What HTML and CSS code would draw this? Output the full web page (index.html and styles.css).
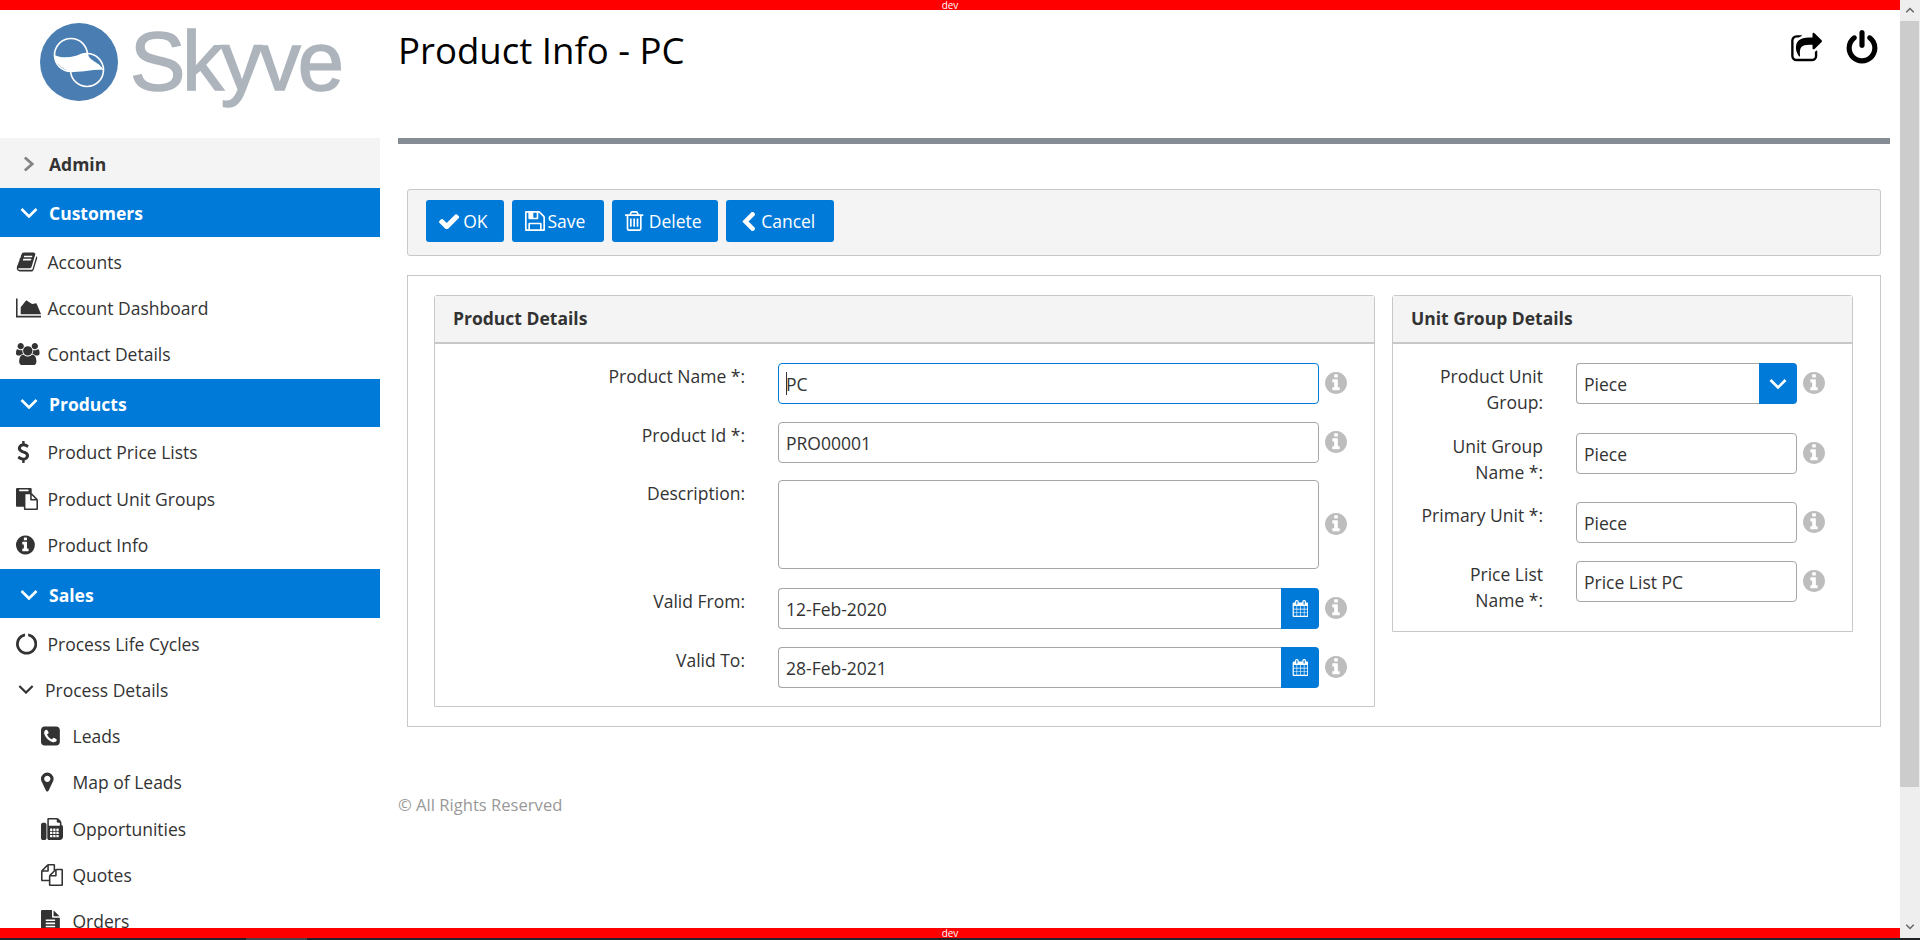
FILE: index.html
```html
<!DOCTYPE html>
<html lang="en">
<head>
  <meta charset="UTF-8">
  <meta name="viewport" content="width=device-width, initial-scale=1.0">
  <title>Product Info - PC</title>
  <link rel="stylesheet" href="styles.css">
</head>
<body>
  <!-- Shared icon paths -->
  <svg class="icon-defs" aria-hidden="true">
    <defs>
      <path id="p-info" d="M1152 1376v-160q0-14-9-23t-23-9h-96v-512q0-14-9-23t-23-9h-320q-14 0-23 9t-9 23v160q0 14 9 23t23 9h96v320h-96q-14 0-23 9t-9 23v160q0 14 9 23t23 9h448q14 0 23-9t9-23zm-128-896v-160q0-14-9-23t-23-9h-192q-14 0-23 9t-9 23v160q0 14 9 23t23 9h192q14 0 23-9t9-23zm640 416q0 209-103 385.5t-279.5 279.5-385.5 103-385.5-103-279.5-279.5-103-385.5 103-385.5 279.5-279.5 385.5-103 385.5 103 279.5 279.5 103 385.5z"/>
      <path id="p-calendar" d="M192 1664h288v-288h-288v288zm352 0h320v-288h-320v288zm-352-352h288v-320h-288v320zm352 0h320v-320h-320v320zm-352-384h288v-288h-288v288zm736 736h320v-288h-320v288zm-384-736h320v-288h-320v288zm768 736h288v-288h-288v288zm-384-352h320v-320h-320v320zm-352-864v-288q0-13-9.5-22.5t-22.5-9.5h-64q-13 0-22.5 9.5t-9.5 22.5v288q0 13 9.5 22.5t22.5 9.5h64q13 0 22.5-9.5t9.5-22.5zm736 864h288v-320h-288v320zm-384-384h320v-288h-320v288zm384 0h288v-288h-288v288zm32-480v-288q0-13-9.5-22.5t-22.5-9.5h-64q-13 0-22.5 9.5t-9.5 22.5v288q0 13 9.5 22.5t22.5 9.5h64q13 0 22.5-9.5t9.5-22.5zm384-64v1280q0 52-38 90t-90 38h-1408q-52 0-90-38t-38-90v-1280q0-52 38-90t90-38h128v-96q0-66 47-113t113-47h64q66 0 113 47t47 113v96h384v-96q0-66 47-113t113-47h64q66 0 113 47t47 113v96h128q52 0 90 38t38 90z"/>
    </defs>
  </svg>

  <div class="window">
    <div class="page">
      <div class="env-bar">dev</div>

      <div class="content">
        <!-- Left side: logo and menu -->
        <aside class="sidebar">
          <div class="logo">
            <svg class="logo-mark" viewBox="0 0 78 78">
              <circle cx="39" cy="39" r="39" fill="#4a7eb2"/>
              <circle cx="31" cy="32" r="16.5" fill="none" stroke="#fff" stroke-width="1.6"/>
              <circle cx="47" cy="47" r="16.5" fill="none" stroke="#fff" stroke-width="1.6"/>
              <path d="M14.500 32C24 37 36 33 47.500 29.500C48 38 60 39 63.500 47C52 46 42 50 31 48.500C23 46 14.500 41 14.500 32Z" fill="#fff"/>
            </svg>
            <span class="logo-text">Skyve</span>
          </div>

          <nav class="menu">
            <div class="menu-head menu-closed">
              <svg class="chev-right" viewBox="0 0 12 16"><path d="M2 1l8 7-8 7"/></svg>
              <span>Admin</span>
            </div>

            <div class="menu-head">
              <svg class="chev-down" viewBox="0 0 18 10"><path d="M1.500 1l7.500 7.500 7.500-7.500"/></svg>
              <span>Customers</span>
            </div>
            <div class="menu-list">
              <a class="menu-item"><span class="menu-icon"><svg class="fa" viewBox="0 0 1792 1792"><path d="M1703 478q40 57 18 129l-275 906q-19 64-76.500 107.500t-122.500 43.500h-923q-77 0-148.500-53.500t-99.500-131.500q-24-67-2-127 0-4 3-27t4-37q1-8-3-21.500t-3-19.500q2-11 8-21t16.500-23.500 16.500-23.500q23-38 45-91.500t30-91.500q3-10 .5-30t-.5-28q3-11 17-28t17-23q21-36 42-92t25-90q1-9-2.500-32t.5-28q4-13 22-30.500t22-22.500q19-26 42.500-84.500t27.500-96.500q1-8-3-25.500t-2-26.500q2-8 9-18t18-23 17-21q8-12 16.500-30.500t15-35 16-36 19.500-32 26.500-23.500 36-11.500 47.500 5.500l-1 3q38-9 51-9h761q74 0 114 56t18 130l-274 906q-36 119-71.500 153.500t-128.500 34.500h-869q-27 0-38 15-11 16-1 43 24 70 144 70h923q29 0 56-15.500t35-41.500l300-987q7-22 5-57 38 15 59 43zm-1064 2q-4 13 2 22.500t20 9.500h608q13 0 25.500-9.500t16.500-22.500l21-64q4-13-2-22.500t-20-9.500h-608q-13 0-25.500 9.500t-16.500 22.500zm-83 256q-4 13 2 22.500t20 9.500h608q13 0 25.500-9.500t16.500-22.500l21-64q4-13-2-22.500t-20-9.500h-608q-13 0-25.500 9.500t-16.500 22.500z"/></svg></span>Accounts</a>
              <a class="menu-item"><span class="menu-icon"><svg class="fa" viewBox="0 0 2048 1792"><path d="M2048 1536v128h-2048v-1536h128v1408h1920zm-384-1024l384 896h-1664v-576l448-576 480 320 352-64z"/></svg></span>Account Dashboard</a>
              <a class="menu-item"><span class="menu-icon"><svg class="fa" viewBox="0 0 1920 1792"><path d="M593 896q-162 5-265 128h-134q-82 0-138-40.500t-56-118.500q0-353 124-353 6 0 43.500 21t97.500 42.500 119 21.500q67 0 133-23-5 37-5 66 0 139 81 256zm1071 637q0 120-73 189.500t-194 69.500h-874q-121 0-194-69.500t-73-189.500q0-53 3.500-103.500t14-109 26.500-108.500 43-97.500 62-81 85.500-53.500 111.500-20q10 0 43 21.500t73 48 107 48 135 21.500 135-21.500 107-48 73-48 43-21.500q61 0 111.500 20t85.500 53.500 62 81 43 97.500 26.500 108.500 14 109 3.500 103.500zm-1024-1277q0 106-75 181t-181 75-181-75-75-181 75-181 181-75 181 75 75 181zm704 384q0 159-112.500 271.500t-271.500 112.500-271.500-112.500-112.500-271.500 112.500-271.500 271.500-112.500 271.500 112.500 112.500 271.500zm576 225q0 78-56 118.500t-138 40.500h-134q-103-123-265-128 81-117 81-256 0-29-5-66 66 23 133 23 59 0 119-21.500t97.500-42.500 43.500-21q124 0 124 353zm-128-609q0 106-75 181t-181 75-181-75-75-181 75-181 181-75 181 75 75 181z"/></svg></span>Contact Details</a>
            </div>

            <div class="menu-head">
              <svg class="chev-down" viewBox="0 0 18 10"><path d="M1.500 1l7.500 7.500 7.500-7.500"/></svg>
              <span>Products</span>
            </div>
            <div class="menu-list">
              <a class="menu-item"><span class="menu-icon"><svg class="fa" viewBox="300 0 1100 1792"><path d="M1362 1185q0 153-99.500 263.500t-258.500 136.500v175q0 14-9 23t-23 9h-135q-13 0-22.500-9.500t-9.500-22.500v-175q-66-9-127.500-31t-101.500-44.500-74-48-46.500-37.500-17.500-18q-17-21-2-41l103-135q7-10 23-12 15-2 24 9l2 2q113 99 243 125 37 8 74 8 81 0 142.500-43t61.500-122q0-28-15-53t-33.500-42-58.500-37.500-66-32-80-32.500q-39-16-61.500-25t-61.500-26.500-62.500-31-56.500-35.500-53.500-42.500-43.500-49-35.500-58-21-66.500-8.500-78q0-138 98-242t255-134v-180q0-13 9.500-22.500t22.500-9.500h135q14 0 23 9t9 23v176q57 6 110.500 23t87 33.500 63.500 37.500 39 29 15 14q17 18 5 38l-81 146q-8 15-23 16-14 3-27-7-3-3-14.500-12t-39-26.500-58.500-32-74.500-26-85.500-11.500q-95 0-155 43t-60 111q0 26 8.500 48t29.500 41.500 39.500 33 56 31 60.500 27 70 27.500q53 20 81 31.500t76 35 75.500 42.500 62 50 53 63.500 31.500 76.500 13 94z"/></svg></span>Product Price Lists</a>
              <a class="menu-item"><span class="menu-icon"><svg class="fa" viewBox="0 0 1792 1792"><path d="M768 1664h896v-640h-416q-40 0-68-28t-28-68v-416h-384v1152zm256-1440v-64q0-13-9.500-22.500t-22.500-9.500h-704q-13 0-22.500 9.500t-9.500 22.500v64q0 13 9.500 22.500t22.500 9.500h704q13 0 22.500-9.500t9.500-22.500zm256 672h299l-299-299v299zm512 128v672q0 40-28 68t-68 28h-960q-40 0-68-28t-28-68v-160h-544q-40 0-68-28t-28-68v-1344q0-40 28-68t68-28h1088q40 0 68 28t28 68v328q21 13 36 28l408 408q28 28 48 76t20 88z"/></svg></span>Product Unit Groups</a>
              <a class="menu-item"><span class="menu-icon"><svg class="fa" viewBox="128 0 1536 1792"><use href="#p-info"/></svg></span>Product Info</a>
            </div>

            <div class="menu-head menu-head-sales">
              <svg class="chev-down" viewBox="0 0 18 10"><path d="M1.500 1l7.500 7.500 7.500-7.500"/></svg>
              <span>Sales</span>
            </div>
            <div class="menu-list">
              <a class="menu-item"><span class="menu-icon"><svg class="fa" viewBox="32 0 1728 1792"><path d="M1760 896q0 176-68.500 336t-184 275.500-275.500 184-336 68.500-336-68.500-275.500-184-184-275.500-68.500-336q0-213 97-398.500t265-305.500 374-151v228q-221 45-366.500 221t-145.500 406q0 130 51 248.500t136.500 204 204 136.500 248.500 51 248.500-51 204-136.500 136.500-204 51-248.500q0-230-145.500-406t-366.500-221v-228q206 31 374 151t265 305.500 97 398.500z"/></svg></span>Process Life Cycles</a>
              <a class="menu-item menu-group"><svg class="chev-group" viewBox="0 0 18 10"><path d="M1.500 1l7.500 7.500 7.500-7.500"/></svg>Process Details</a>
              <a class="menu-item menu-sub"><span class="menu-icon"><svg class="fa" viewBox="128 0 1536 1792"><path d="M1408 1193q0-11-2-16t-18-16.500-40.500-25-47.500-26.500-45.500-25-28.500-15q-5-3-19-13t-25-15-21-5q-15 0-36.500 20.500t-39.500 45-38.500 45-33.500 20.500q-7 0-16.500-3.500t-15.500-6.500-17-9.500-14-8.500q-99-55-170-126.500t-127-170.500q-2-3-8.500-14t-9.500-17-6.500-15.500-3.500-16.500q0-13 20.500-33.500t45-38.500 45-39.500 20.500-36.500q0-10-5-21t-15-25-13-19q-3-6-15-28.500t-25-45.500-26.500-47.500-25-40.500-16.500-18-16-2q-48 0-101 22-46 21-80 94.500t-34 130.500q0 16 2.500 34t5 30.500 9 33 10 29.500 12.500 33 11 30q60 164 216.500 320.500t320.500 216.500q6 2 30 11t33 12.500 29.500 10 33 9 30.500 5 34 2.500q57 0 130.500-34t94.500-80q22-53 22-101zm256-777v960q0 119-84.500 203.500t-203.500 84.500h-960q-119 0-203.500-84.500t-84.500-203.500v-960q0-119 84.500-203.500t203.500-84.500h960q119 0 203.500 84.500t84.500 203.500z"/></svg></span>Leads</a>
              <a class="menu-item menu-sub"><span class="menu-icon"><svg class="fa" viewBox="384 0 1024 1792"><path d="M1152 640q0-106-75-181t-181-75-181 75-75 181 75 181 181 75 181-75 75-181zm256 0q0 109-33 179l-364 774q-16 33-47.500 52t-67.500 19-67.500-19-46.500-52l-365-774q-33-70-33-179 0-212 150-362t362-150 362 150 150 362z"/></svg></span>Map of Leads</a>
              <a class="menu-item menu-sub"><span class="menu-icon"><svg class="fa" viewBox="0 0 1792 1792"><path d="M288 384q66 0 113 47t47 113v1088q0 66-47 113t-113 47h-128q-66 0-113-47t-47-113v-1088q0-66 47-113t113-47h128zm1376 163q58 34 93 93t35 128v768q0 106-75 181t-181 75h-864q-66 0-113-47t-47-113v-1536q0-40 28-68t68-28h672q40 0 88 20t76 48l152 152q28 28 48 76t20 88v163zm-736 989v-128q0-14-9-23t-23-9h-128q-14 0-23 9t-9 23v128q0 14 9 23t23 9h128q14 0 23-9t9-23zm0-256v-128q0-14-9-23t-23-9h-128q-14 0-23 9t-9 23v128q0 14 9 23t23 9h128q14 0 23-9t9-23zm0-256v-128q0-14-9-23t-23-9h-128q-14 0-23 9t-9 23v128q0 14 9 23t23 9h128q14 0 23-9t9-23zm256 512v-128q0-14-9-23t-23-9h-128q-14 0-23 9t-9 23v128q0 14 9 23t23 9h128q14 0 23-9t9-23zm0-256v-128q0-14-9-23t-23-9h-128q-14 0-23 9t-9 23v128q0 14 9 23t23 9h128q14 0 23-9t9-23zm0-256v-128q0-14-9-23t-23-9h-128q-14 0-23 9t-9 23v128q0 14 9 23t23 9h128q14 0 23-9t9-23zm256 512v-128q0-14-9-23t-23-9h-128q-14 0-23 9t-9 23v128q0 14 9 23t23 9h128q14 0 23-9t9-23zm0-256v-128q0-14-9-23t-23-9h-128q-14 0-23 9t-9 23v128q0 14 9 23t23 9h128q14 0 23-9t9-23zm0-256v-128q0-14-9-23t-23-9h-128q-14 0-23 9t-9 23v128q0 14 9 23t23 9h128q14 0 23-9t9-23zm96-384v-256h-160q-40 0-68-28t-28-68v-160h-640v512h896z"/></svg></span>Opportunities</a>
              <a class="menu-item menu-sub"><span class="menu-icon"><svg class="fa" viewBox="0 0 1792 1792"><path d="M1696 384q40 0 68 28t28 68v1216q0 40-28 68t-68 28h-960q-40 0-68-28t-28-68v-288h-544q-40 0-68-28t-28-68v-672q0-40 20-88t48-76l408-408q28-28 76-48t88-20h416q40 0 68 28t28 68v328q68-40 128-40h416zm-544 213l-299 299h299v-299zm-640-384l-299 299h299v-299zm196 647l316-316v-416h-384v416q0 40-28 68t-68 28h-416v640h512v-256q0-40 20-88t48-76zm956 804v-1152h-384v416q0 40-28 68t-68 28h-416v640h896z"/></svg></span>Quotes</a>
              <a class="menu-item menu-sub"><span class="menu-icon"><svg class="fa" viewBox="128 0 1536 1792"><path d="M1596 476q14 14 28 36h-472v-472q22 14 36 28zm-476 164h544v1056q0 40-28 68t-68 28h-1344q-40 0-68-28t-28-68v-1600q0-40 28-68t68-28h800v544q0 40 28 68t68 28zm160 736v-64q0-14-9-23t-23-9h-704q-14 0-23 9t-9 23v64q0 14 9 23t23 9h704q14 0 23-9t9-23zm0-256v-64q0-14-9-23t-23-9h-704q-14 0-23 9t-9 23v64q0 14 9 23t23 9h704q14 0 23-9t9-23zm0-256v-64q0-14-9-23t-23-9h-704q-14 0-23 9t-9 23v64q0 14 9 23t23 9h704q14 0 23-9t9-23z"/></svg></span>Orders</a>
            </div>
          </nav>
        </aside>

        <!-- Right side: the edit view -->
        <main class="main">
          <header class="page-head">
            <h1>Product Info - PC</h1>
            <div class="head-icons">
              <svg class="head-share" viewBox="0 0 1728 1536"><path d="M1472 989v259q0 119-84.500 203.500t-203.500 84.500h-832q-119 0-203.500-84.500t-84.500-203.500v-832q0-119 84.500-203.500t203.500-84.500h255q13 0 22.500 9.500t9.500 22.500q0 27-26 32-77 26-133 60-10 4-16 4h-112q-66 0-113 47t-47 113v832q0 66 47 113t113 47h832q66 0 113-47t47-113v-214q0-19 18-29 28-13 54-37 16-16 35-8 21 9 21 29zm237-496l-384 384q-18 19-45 19-12 0-25-5-39-17-39-59v-192h-160q-323 0-438 131-119 137-74 473 3 23-20 34-8 2-12 2-16 0-26-13-10-14-21-31t-39.500-68.500-49.500-99.500-38.500-114-17.500-122q0-49 3.500-91t14-90 28-88 47-81.500 68.500-74 94.500-61.500 124.500-48.500 159.500-30.500 196.500-11h160v-192q0-42 39-59 13-5 25-5 26 0 45 19l384 384q19 19 19 45t-19 45z"/></svg>
              <svg class="head-power" viewBox="128 0 1536 1792"><path d="M1664 896q0 156-61 298t-164 245-245 164-298 61-298-61-245-164-164-245-61-298q0-182 80.500-343t226.500-270q43-32 95.500-25t83.500 50q32 42 24.500 94.500t-49.500 84.500q-98 74-151.500 181t-53.500 228q0 104 40.500 198.500t109.500 163.500 163.500 109.500 198.500 40.500 198.500-40.500 163.500-109.500 109.500-163.500 40.500-198.500q0-121-53.500-228t-151.500-181q-42-32-49.500-84.500t24.500-94.500q31-43 84-50t95 25q146 109 226.500 270t80.500 343zm-640-768v640q0 52-38 90t-90 38-90-38-38-90v-640q0-52 38-90t90-38 90 38 38 90z"/></svg>
            </div>
          </header>
          <div class="head-rule"></div>

          <div class="toolbar">
            <button class="btn btn-ok"><svg class="btn-icon" viewBox="121 320 1550 1152"><path d="M1671 566q0 40-28 68l-724 724-136 136q-28 28-68 28t-68-28l-136-136-362-362q-28-28-28-68t28-68l136-136q28-28 68-28t68 28l294 295 656-657q28-28 68-28t68 28l136 136q28 28 28 68z"/></svg>OK</button>
            <button class="btn btn-save"><svg class="btn-icon" viewBox="128 128 1536 1536"><path d="M512 1536h768v-384h-768v384zm896 0h128v-896q0-14-10-38.500t-20-34.500l-281-281q-10-10-34-20t-39-10v416q0 40-28 68t-68 28h-576q-40 0-68-28t-28-68v-416h-128v1280h128v-416q0-40 28-68t68-28h832q40 0 68 28t28 68v416zm-384-928v-320q0-13-9.500-22.500t-22.500-9.500h-192q-13 0-22.500 9.500t-9.500 22.500v320q0 13 9.500 22.500t22.500 9.500h192q13 0 22.500-9.500t9.500-22.500zm640 32v928q0 40-28 68t-68 28h-1344q-40 0-68-28t-28-68v-1344q0-40 28-68t68-28h928q40 0 88 20t76 48l280 280q28 28 48 76t20 88z"/></svg>Save</button>
            <button class="btn btn-delete"><svg class="btn-icon" viewBox="192 128 1408 1536"><path d="M704 736v576q0 14-9 23t-23 9h-64q-14 0-23-9t-9-23v-576q0-14 9-23t23-9h64q14 0 23 9t9 23zm256 0v576q0 14-9 23t-23 9h-64q-14 0-23-9t-9-23v-576q0-14 9-23t23-9h64q14 0 23 9t9 23zm256 0v576q0 14-9 23t-23 9h-64q-14 0-23-9t-9-23v-576q0-14 9-23t23-9h64q14 0 23 9t9 23zm128 724v-948h-896v948q0 22 7 40.500t14.500 27 10.500 8.500h832q3 0 10.500-8.500t14.500-27 7-40.500zm-672-1076h448l-48-117q-7-9-17-11h-317q-10 2-17 11zm928 32v64q0 14-9 23t-23 9h-96v948q0 83-47 143.500t-113 60.500h-832q-66 0-113-58.500t-47-141.500v-952h-96q-14 0-23-9t-9-23v-64q0-14 9-23t23-9h309l70-167q15-37 54-63t79-26h320q40 0 79 26t54 63l70 167h309q14 0 23 9t9 23z"/></svg>Delete</button>
            <button class="btn btn-cancel"><svg class="btn-icon" viewBox="365 64 1100 1536"><path d="M1427 301l-531 531 531 531q19 19 19 45t-19 45l-166 166q-19 19-45 19t-45-19l-742-742q-19-19-19-45t19-45l742-742q19-19 45-19t45 19l166 166q19 19 19 45t-19 45z"/></svg>Cancel</button>
          </div>

          <div class="edit-panel">
            <section class="card card-product">
              <h2 class="card-head">Product Details</h2>
              <div class="card-form">
                <label class="field-label">Product Name *:</label>
                <div class="field-box focused"><span class="caret"></span>PC</div>
                <svg class="info" viewBox="128 128 1536 1536"><use href="#p-info"/></svg>

                <label class="field-label">Product Id *:</label>
                <div class="field-box">PRO00001</div>
                <svg class="info" viewBox="128 128 1536 1536"><use href="#p-info"/></svg>

                <label class="field-label">Description:</label>
                <div class="field-box field-area"></div>
                <svg class="info info-area" viewBox="128 128 1536 1536"><use href="#p-info"/></svg>

                <label class="field-label">Valid From:</label>
                <div class="field-group">
                  <div class="field-box">12-Feb-2020</div>
                  <span class="addon addon-date"><svg class="cal" viewBox="0 0 1664 1792"><use href="#p-calendar"/></svg></span>
                </div>
                <svg class="info" viewBox="128 128 1536 1536"><use href="#p-info"/></svg>

                <label class="field-label">Valid To:</label>
                <div class="field-group">
                  <div class="field-box">28-Feb-2021</div>
                  <span class="addon addon-date"><svg class="cal" viewBox="0 0 1664 1792"><use href="#p-calendar"/></svg></span>
                </div>
                <svg class="info" viewBox="128 128 1536 1536"><use href="#p-info"/></svg>
              </div>
            </section>

            <section class="card card-unit">
              <h2 class="card-head">Unit Group Details</h2>
              <div class="card-form">
                <label class="field-label">Product Unit Group:</label>
                <div class="field-group">
                  <div class="field-box">Piece</div>
                  <span class="addon addon-select"><svg class="chev-select" viewBox="0 0 18 10"><path d="M1.500 1l7.500 7.500 7.500-7.500"/></svg></span>
                </div>
                <svg class="info" viewBox="128 128 1536 1536"><use href="#p-info"/></svg>

                <label class="field-label">Unit Group Name *:</label>
                <div class="field-box">Piece</div>
                <svg class="info" viewBox="128 128 1536 1536"><use href="#p-info"/></svg>

                <label class="field-label">Primary Unit *:</label>
                <div class="field-box">Piece</div>
                <svg class="info" viewBox="128 128 1536 1536"><use href="#p-info"/></svg>

                <label class="field-label">Price List Name *:</label>
                <div class="field-box">Price List PC</div>
                <svg class="info" viewBox="128 128 1536 1536"><use href="#p-info"/></svg>
              </div>
            </section>
          </div>

          <footer class="copyright">© All Rights Reserved</footer>
        </main>
      </div>

      <div class="env-bar">dev</div>
    </div>

    <!-- Page scrollbar -->
    <div class="scrollbar">
      <svg class="scroll-arrow" viewBox="0 0 12 8"><path d="M1 7l5-5 5 5"/></svg>
      <div class="scroll-thumb"></div>
      <svg class="scroll-arrow scroll-arrow-down" viewBox="0 0 12 8"><path d="M1 1l5 5 5-5"/></svg>
    </div>
  </div>

  <div class="taskbar"><span class="task-active"></span></div>
</body>
</html>
```

FILE: styles.css
```css
/* Basic reset for margin and padding */
* {
  margin: 0;
  padding: 0;
  box-sizing: border-box;
}

body {
  font-family: "Open Sans", "Liberation Sans", sans-serif;
  font-size: 17.5px;
  color: #333;
  background-color: #fff;
  height: 100vh;
  display: flex;
  flex-direction: column;
  overflow: hidden;
}

.icon-defs {
  display: none;
}

/* Outer frame */
.window {
  flex: 1;
  min-height: 0;
  display: flex;
}

.page {
  flex: 1;
  min-width: 0;
  display: flex;
  flex-direction: column;
}

.env-bar {
  height: 10px;
  flex: none;
  background-color: #f00;
  color: #fff;
  font-size: 10px;
  line-height: 10px;
  text-align: center;
}

.content {
  flex: 1;
  min-height: 0;
  display: flex;
  overflow: hidden;
}

/* Sidebar */
.sidebar {
  width: 380px;
  flex: none;
  overflow: hidden;
}

.logo {
  height: 128px;
  padding: 13px 0 0 40px;
  display: flex;
  gap: 12px;
}

.logo-mark {
  width: 78px;
  height: 78px;
}

.logo-text {
  font-family: "Liberation Sans", Arial, sans-serif;
  font-size: 83px;
  line-height: 78px;
  letter-spacing: -3px;
  color: #aeb4bc;
  -webkit-text-stroke: 1.5px #aeb4bc;
}

.menu-head {
  height: 48.5px;
  display: flex;
  align-items: center;
  padding: 2px 0 0 20px;
  background-color: #007ad9;
  color: #fff;
  font-weight: 700;
}

.menu-head span {
  margin-left: 11px;
}

.menu-closed {
  height: 50px;
  background-color: #f4f4f4;
  color: #333;
  padding-left: 23px;
}

.menu-closed span {
  margin-left: 15px;
}

.menu-head-sales {
  height: 49.3px;
}

.chev-down {
  width: 18px;
  height: 10px;
  fill: none;
  stroke: #fff;
  stroke-width: 2.6;
}

.chev-right {
  width: 11px;
  height: 16px;
  fill: none;
  stroke: #848484;
  stroke-width: 3;
}

.menu-list {
  padding: 2px 0 1.2px;
}

.menu-item {
  height: 46.3px;
  display: flex;
  align-items: center;
  padding-left: 16px;
}

.menu-icon {
  width: 31.500px;
  flex: none;
  display: flex;
  align-items: center;
}

.fa {
  height: 22px;
  fill: #333;
}

.menu-group {
  padding-left: 18px;
}

.chev-group {
  width: 16px;
  height: 9px;
  margin-right: 11px;
  fill: none;
  stroke: #333;
  stroke-width: 2.4;
}

.menu-sub {
  padding-left: 41px;
}

/* Main column */
.main {
  flex: 1;
  min-width: 0;
  padding: 0 10px 0 18px;
}

.page-head {
  height: 128px;
  display: flex;
  justify-content: space-between;
}

h1 {
  font-size: 36.6px;
  font-weight: 400;
  line-height: 44px;
  color: #000;
  padding-top: 18px;
}

.head-icons {
  display: flex;
  gap: 24px;
  padding: 20px 12px 0 0;
}

.head-share {
  width: 32px;
  height: 30px;
  margin-top: 2px;
}

.head-power {
  width: 32px;
  height: 36px;
}

.head-rule {
  height: 6px;
  background-color: #858c93;
}

.toolbar {
  margin: 45px 9px 0;
  height: 67px;
  padding: 10px 18px;
  display: flex;
  gap: 8px;
  background-color: #f4f4f4;
  border: 1px solid #c8c8c8;
  border-radius: 3px;
}

.btn {
  height: 42px;
  display: flex;
  align-items: center;
  padding: 0 16px 0 13px;
  border: none;
  border-radius: 3px;
  background-color: #007ad9;
  color: #fff;
  font-family: inherit;
  font-size: 17.5px;
}

.btn-icon {
  height: 19px;
  margin-right: 4px;
  fill: #fff;
}

.btn-ok .btn-icon {
  height: 15px;
}

.btn-save {
  padding-right: 19px;
}

.btn-save .btn-icon {
  height: 20px;
  margin-right: 3px;
}

.btn-delete .btn-icon {
  height: 20px;
  margin-right: 5px;
}

.btn-cancel {
  padding: 0 19px 0 16px;
}

.btn-cancel .btn-icon {
  margin-right: 6px;
}

/* Form panels */
.edit-panel {
  margin: 19px 9px 0;
  padding: 19px 26px;
  display: flex;
  align-items: flex-start;
  gap: 17px;
  border: 1px solid #c8c8c8;
}

.card {
  border: 1px solid #c8c8c8;
  border-radius: 3px 3px 0 0;
}

.card-product {
  width: 941px;
}

.card-unit {
  width: 461px;
}

.card-head {
  height: 48px;
  padding-left: 18px;
  background-color: #f4f4f4;
  border-bottom: 2px solid #c8c8c8;
  font-size: 17.5px;
  font-weight: 700;
  line-height: 45px;
}

.card-form {
  display: grid;
  align-items: start;
  row-gap: 17.5px;
  padding: 19px 0 18.5px;
}

.card-product .card-form {
  grid-template-columns: 343px 541px 28px;
}

.card-unit .card-form {
  grid-template-columns: 183px 221px 28px;
}

.field-label {
  line-height: 26px;
  text-align: right;
  padding: 0 33px 0 0;
}

.card-unit .field-label {
  padding-left: 27px;
}

.field-box {
  position: relative;
  flex: 1;
  min-width: 0;
  height: 41px;
  padding: 1px 7px 0;
  line-height: 38px;
  border: 1px solid #a6a6a6;
  border-radius: 4px;
}

.focused {
  border-color: #007ad9;
}

.caret {
  position: absolute;
  left: 7px;
  top: 8px;
  width: 1px;
  height: 23px;
  background-color: #333;
}

.field-area {
  height: 89px;
  margin-bottom: 1.5px;
}

.field-group {
  display: flex;
}

.field-group .field-box {
  border-right: none;
  border-radius: 4px 0 0 4px;
}

.addon {
  flex: none;
  height: 41px;
  width: 38px;
  display: flex;
  align-items: center;
  justify-content: center;
  background-color: #007ad9;
  border-radius: 0 4px 4px 0;
}

.cal {
  height: 17px;
  fill: #fff;
}

.chev-select {
  width: 18px;
  height: 10px;
  fill: none;
  stroke: #fff;
  stroke-width: 2.6;
}

.info {
  width: 22px;
  height: 22px;
  fill: #bdbdbd;
  margin: 9px 0 0 6px;
}

.info-area {
  margin-top: 33px;
}

.copyright {
  margin-top: 66px;
  color: #999;
  font-size: 16.6px;
  line-height: 24px;
}

/* Scrollbar */
.scrollbar {
  width: 20px;
  flex: none;
  display: flex;
  flex-direction: column;
  align-items: flex-start;
  background-color: #eee;
}

.scroll-arrow {
  flex: none;
  width: 10px;
  height: 6px;
  margin: 7px 0 8px 5px;
  fill: none;
  stroke: #666;
  stroke-width: 2;
}

.scroll-thumb {
  width: 19px;
  height: 766px;
  background-color: #ccc;
}

.scroll-arrow-down {
  margin-top: auto;
}

.taskbar {
  height: 2px;
  flex: none;
  background-color: #1f2326;
}

.task-active {
  display: block;
  width: 61px;
  height: 2px;
  margin-left: 246px;
  background-color: #444;
}
```
